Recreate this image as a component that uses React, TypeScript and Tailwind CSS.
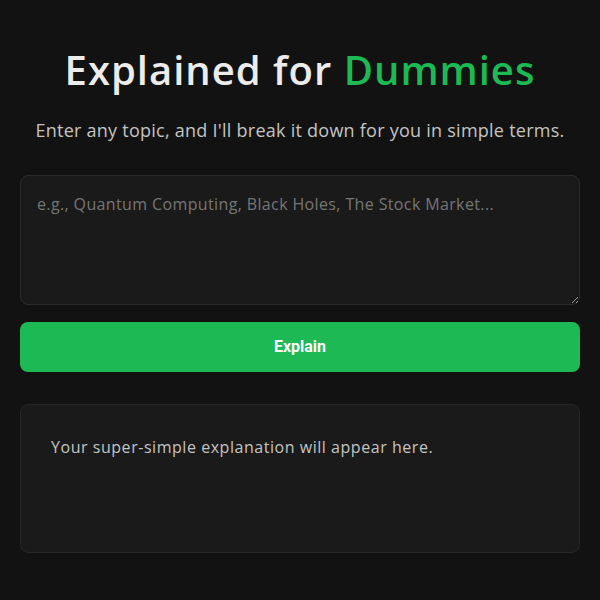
import React from 'react';

export default function App() {
  const [topic, setTopic] = React.useState('');

  return (
    <div className="min-h-screen w-full bg-[#121212] px-5 pt-[46px] text-[#e0e0e0]" style={{ fontFamily: '"Open Sans", sans-serif' }}>
      <h1 className="text-center text-[40px] font-semibold leading-[48px] tracking-[1px] text-[#ececec]">
        Explained for <span className="text-[#1db954]">Dummies</span>
      </h1>
      <p className="mt-[24px] text-center text-[18px] leading-6 tracking-[0.25px] text-[#c4c4c4]">
        Enter any topic, and I'll break it down for you in simple terms.
      </p>

      <textarea
        value={topic}
        onChange={e => setTopic(e.target.value)}
        placeholder="e.g., Quantum Computing, Black Holes, The Stock Market..."
        className="mt-[33px] block h-[130px] w-full rounded-lg border border-[#2a2a2a] bg-[#1a1a1a] px-4 py-4 text-base tracking-[0.37px] text-[#e0e0e0] outline-none placeholder:text-[#767676]"
      />

      <button
        className="mt-[17px] block h-[50px] w-full rounded-lg bg-[#1db954] text-base font-bold text-white"
        style={{ fontFamily: 'Roboto, sans-serif' }}
      >
        Explain
      </button>

      <div className="mt-[32px] h-[149px] rounded-lg border border-[#262626] bg-[#1a1a1a] px-[30px] py-[30px]">
        <p className="text-base leading-6 tracking-[0.54px] text-[#c4c4c4]">Your super-simple explanation will appear here.</p>
      </div>
    </div>
  );
}
